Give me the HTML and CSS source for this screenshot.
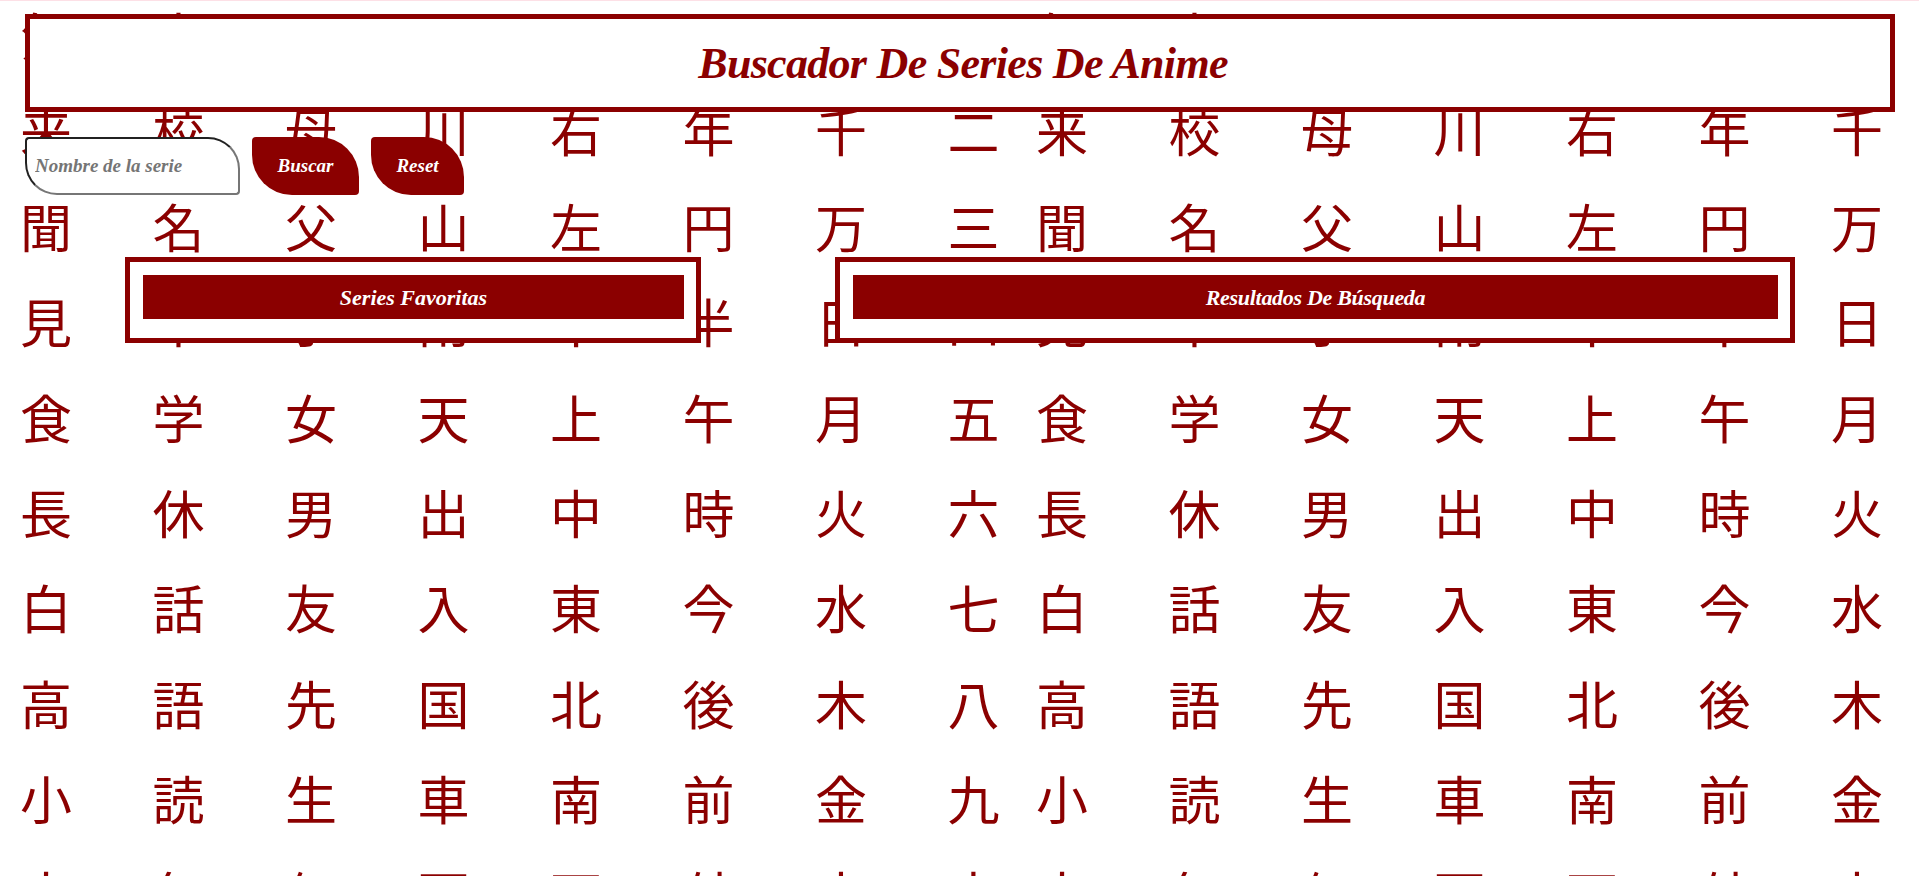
FILE: index.html
```html
<!DOCTYPE html>
<html lang="es">
<head>
    <meta charset="UTF-8">
    <meta name="viewport" content="width=device-width, initial-scale=1.0">
    <title>Buscador De Series De Anime</title>
    <link rel="stylesheet" href="styles.css">
</head>
<body>
    <!-- fondo de kanji: el mismo bloque se repite dos veces -->
    <div class="kanji-bg" lang="ja">
        <div class="kanji-tile">
            <p>気本人週間一百四</p>
            <p>来校母川右年千二</p>
            <p>聞名父山左円万三</p>
            <p>見本子雨十半日四</p>
            <p>食学女天上午月五</p>
            <p>長休男出中時火六</p>
            <p>白話友入東今水七</p>
            <p>高語先国北後木八</p>
            <p>小読生車南前金九</p>
            <p>大毎何百西外本土</p>
        </div>
        <div class="kanji-tile">
            <p>気本人週間一百四</p>
            <p>来校母川右年千二</p>
            <p>聞名父山左円万三</p>
            <p>見本子雨十半日四</p>
            <p>食学女天上午月五</p>
            <p>長休男出中時火六</p>
            <p>白話友入東今水七</p>
            <p>高語先国北後木八</p>
            <p>小読生車南前金九</p>
            <p>大毎何百西外本土</p>
        </div>
    </div>

    <header class="title-box">
        <h1>Buscador De Series De Anime</h1>
    </header>

    <form class="search-form">
        <input type="text" class="search-input" placeholder="Nombre de la serie">
        <button type="button" class="leaf-btn search-btn">Buscar</button>
        <button type="button" class="leaf-btn reset-btn">Reset</button>
    </form>

    <main class="panels">
        <section class="panel panel-fav">
            <h2>Series Favoritas</h2>
        </section>
        <section class="panel panel-results">
            <h2>Resultados De Búsqueda</h2>
        </section>
    </main>
</body>
</html>
```

FILE: styles.css
```css
html {
    background-color: #fff;
}
body {
    margin: 0;
    padding: 14px 24px 0 25px;
    font-family: "Liberation Serif", serif;
    font-style: italic;
    font-weight: bold;
}
.kanji-bg {
    position: absolute;
    top: 0;
    left: 0;
    right: 0;
    bottom: 0;
    z-index: -1;
    display: flex;
    overflow: hidden;
    border-top: 1px solid #fde0e6;
    font-family: "Noto Sans CJK JP", sans-serif;
    font-style: normal;
    font-weight: normal;
    color: #8b0000;
    filter: blur(0.5px);
}
.kanji-tile {
    flex: 0 0 1016px;
    margin-top: -14px;
    padding-left: 20px;
    box-sizing: border-box;
    overflow: hidden;
}
.kanji-tile p {
    margin: 0;
    font-size: 52px;
    line-height: 95.4px;
    letter-spacing: 80.5px;
    white-space: nowrap;
}
.title-box {
    height: 98px;
    box-sizing: border-box;
    padding-left: 6px;
    border: 5px solid #8b0000;
    background-color: #fff;
    display: flex;
    align-items: center;
    justify-content: center;
}
h1 {
    margin: 0;
    font-size: 44px;
    letter-spacing: -0.7px;
    color: #8b0000;
}
.search-form {
    display: flex;
    margin-top: 25px;
}
.search-input {
    width: 215px;
    height: 58px;
    box-sizing: border-box;
    padding: 0 8px;
    margin-right: 12px;
    border: 2px inset #767676;
    border-radius: 4px 32px 4px 32px;
    background-color: #fff;
    font: italic bold 19px "Liberation Serif", serif;
}
.leaf-btn {
    height: 58px;
    padding: 0;
    border: none;
    border-radius: 4px 40px 4px 40px;
    background-color: #8b0000;
    color: #fff;
    font: italic bold 19px "Liberation Serif", serif;
}
.search-btn {
    width: 107px;
    margin-right: 12px;
}
.reset-btn {
    width: 93px;
}
.panels {
    display: flex;
    gap: 134px;
    margin-top: 62px;
    padding-left: 100px;
}
.panel {
    height: 86px;
    box-sizing: border-box;
    padding: 13px 12px 19px 13px;
    border: 5px solid #8b0000;
    background-color: #fff;
}
.panel-fav {
    width: 576px;
}
.panel-results {
    width: 960px;
}
.panel h2 {
    margin: 0;
    height: 44px;
    line-height: 46px;
    text-align: center;
    font-size: 22px;
    background-color: #8b0000;
    color: #fff;
}
.panel-results h2 {
    letter-spacing: -0.3px;
}
```
